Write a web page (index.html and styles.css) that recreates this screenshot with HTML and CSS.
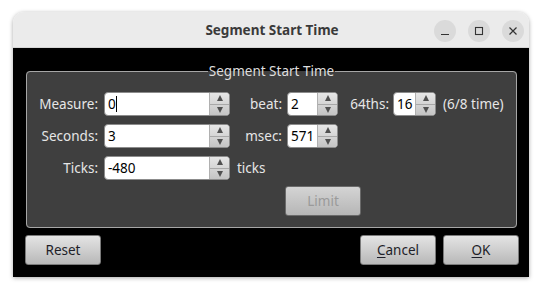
FILE: index.html
```html
<!DOCTYPE html>
<html>
<head>
<meta charset="utf-8">
<link rel="stylesheet" href="styles.css">
</head>
<body>
<div class="window">
  <div class="titlebar">
    <div class="title">Segment Start Time</div>
    <div class="wbtns">
      <span class="wbtn"><svg width="10" height="10" viewBox="0 0 10 10"><path d="M1 8.5h8" stroke="#333" stroke-width="1.2"/></svg></span>
      <span class="wbtn"><svg width="10" height="10" viewBox="0 0 10 10"><rect x="1.5" y="1.5" width="7" height="7" fill="none" stroke="#333" stroke-width="1.1"/></svg></span>
      <span class="wbtn"><svg width="10" height="10" viewBox="0 0 10 10"><path d="M1.5 1.5l7 7M8.5 1.5l-7 7" stroke="#333" stroke-width="1.2"/></svg></span>
    </div>
  </div>
  <div class="content">
    <fieldset class="group">
      <legend>Segment Start Time</legend>
      <div class="grid">
        <div class="lbl">Measure:</div>
        <div class="spin w126"><div class="val">0<span class="caret"></span></div><div class="arrows"><span class="up"></span><span class="dn"></span></div></div>
        <div class="lbl2">beat:</div>
        <div class="spin w51"><div class="val">2</div><div class="arrows"><span class="up"></span><span class="dn"></span></div></div>
        <div class="lbl3">64ths:</div>
        <div class="spin w43"><div class="val">16</div><div class="arrows"><span class="up"></span><span class="dn"></span></div></div>
        <div class="note">(6/8 time)</div>

        <div class="lbl">Seconds:</div>
        <div class="spin w126"><div class="val">3</div><div class="arrows"><span class="up"></span><span class="dn"></span></div></div>
        <div class="lbl2">msec:</div>
        <div class="spin w51"><div class="val">571</div><div class="arrows"><span class="up"></span><span class="dn"></span></div></div>
        <div class="filler"></div>

        <div class="lbl">Ticks:</div>
        <div class="spin w126"><div class="val">-480</div><div class="arrows"><span class="up"></span><span class="dn"></span></div></div>
        <div class="unit">ticks</div>
      </div>
      <div class="limitrow"><button class="btn disabled">Limit</button></div>
    </fieldset>
    <div class="actions">
      <button class="btn">Reset</button>
      <div class="right">
        <button class="btn"><u>C</u>ancel</button>
        <button class="btn"><u>O</u>K</button>
      </div>
    </div>
  </div>
</div>
</body>
</html>
```
FILE: styles.css
```css
html, body {
  margin: 0;
  padding: 0;
  background: #ffffff;
}
body {
  font-family: "Noto Sans", "DejaVu Sans", sans-serif;
  width: 545px;
  height: 293px;
  overflow: hidden;
}
.window {
  margin: 12px 0 0 13px;
  width: 516px;
  height: 265px;
  border-radius: 11px 11px 0 0;
  overflow: hidden;
  box-shadow: 0 1px 4px rgba(0,0,0,0.35);
  display: flex;
  flex-direction: column;
}
.titlebar {
  height: 36px;
  flex: none;
  background: #ebebeb;
  display: flex;
  align-items: center;
  justify-content: center;
  position: relative;
  box-sizing: border-box;
  border-bottom: 1px solid #d6d6d6;
}
.title {
  font-weight: bold;
  font-size: 13.5px;
  color: #3a3a3a;
  margin-left: 2px;
}
.wbtns {
  position: absolute;
  right: 5px;
  top: 8px;
  display: flex;
  gap: 12px;
}
.wbtn {
  width: 22px;
  height: 22px;
  border-radius: 50%;
  background: #dadada;
  display: flex;
  align-items: center;
  justify-content: center;
}
.content {
  flex: 1;
  background: #000;
  padding: 15px 12px 13px 13px;
  display: flex;
  flex-direction: column;
}
.group {
  margin: 0;
  padding: 13px 0 9px 0;
  border: 1px solid #a6a6a6;
  border-radius: 4px;
  background: #3f3f3f;
  height: 165px;
  box-sizing: border-box;
}
legend {
  margin: 0 auto;
  padding: 0 1px;
  color: #dedede;
  font-size: 13.5px;
  line-height: 16px;
}
.grid {
  display: grid;
  grid-template-columns: 77px 126px 57px 51px 55px 43px auto;
  grid-auto-rows: 24px;
  row-gap: 8px;
  column-gap: 0;
  align-items: center;
  color: #e6e6e6;
  font-size: 13.5px;
}
.lbl {
  text-align: right;
  padding-right: 6px;
}
.lbl2, .lbl3 {
  text-align: right;
  padding-right: 5px;
}
.lbl3 { padding-right: 4px; }
.note { padding-left: 7px; white-space: nowrap; }
.unit { padding-left: 7px; }
.filler { grid-column: span 3; }
.spin {
  height: 24px;
  box-sizing: border-box;
  border: 1px solid #8c8c8c;
  border-radius: 4px;
  background: #fff;
  display: flex;
  overflow: hidden;
}
.w126 { width: 126px; }
.w51 { width: 51px; }
.w43 { width: 43px; }
.val {
  flex: 1;
  color: #000;
  padding-left: 3px;
  line-height: 22px;
  font-size: 13.5px;
  display: flex;
  align-items: center;
}
.caret {
  display: inline-block;
  width: 1px;
  height: 16px;
  background: #000;
}
.arrows {
  width: 19px;
  flex: none;
  display: flex;
  flex-direction: column;
  border-left: 1px solid #b0b0b0;
  background: linear-gradient(#e6e6e6, #c4c4c4);
}
.arrows span {
  flex: 1;
  display: flex;
  align-items: center;
  justify-content: center;
}
.arrows .up { border-bottom: 1px solid #a8a8a8; }
.arrows .up::after {
  content: "";
  border-left: 3.5px solid transparent;
  border-right: 3.5px solid transparent;
  border-bottom: 6px solid #505050;
}
.arrows .dn::after {
  content: "";
  border-left: 3.5px solid transparent;
  border-right: 3.5px solid transparent;
  border-top: 6px solid #505050;
}
.limitrow {
  margin-top: 6px;
  padding-left: 258px;
}
.btn {
  width: 76px;
  height: 30px;
  border: 1px solid #7a7a7a;
  border-radius: 3px;
  background: linear-gradient(#e4e4e4, #b8b8b8);
  font-family: "Noto Sans", "DejaVu Sans", sans-serif;
  font-size: 13.5px;
  color: #1e1e28;
  padding: 0;
}
.btn u { text-underline-offset: 2px; }
.btn.disabled {
  color: #9a9a9a;
  background: linear-gradient(#d4d4d4, #b6b6b6);
  border-color: #6a6a6a;
}
.actions {
  margin-top: 7px;
  display: flex;
  justify-content: space-between;
  margin-left: -1px;
  margin-right: -2px;
}
.right {
  display: flex;
  gap: 7px;
}
```
